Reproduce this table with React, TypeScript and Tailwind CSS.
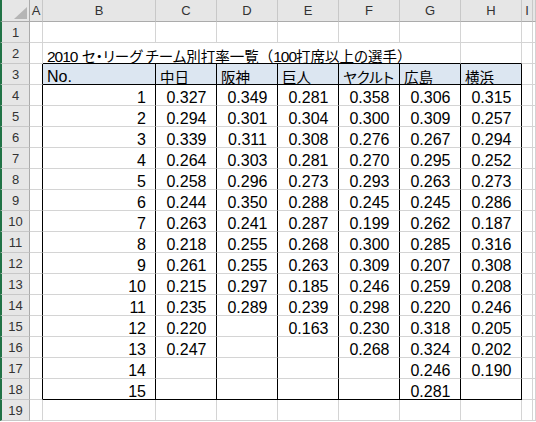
import React from "react";

const cols = ["A", "B", "C", "D", "E", "F", "G", "H", "I", ""];
const teams = ["中日", "阪神", "巨人", "ヤクルト", "広島", "横浜"];
const data: (string | null)[][] = [
  ["0.327", "0.349", "0.281", "0.358", "0.306", "0.315"],
  ["0.294", "0.301", "0.304", "0.300", "0.309", "0.257"],
  ["0.339", "0.311", "0.308", "0.276", "0.267", "0.294"],
  ["0.264", "0.303", "0.281", "0.270", "0.295", "0.252"],
  ["0.258", "0.296", "0.273", "0.293", "0.263", "0.273"],
  ["0.244", "0.350", "0.288", "0.245", "0.245", "0.286"],
  ["0.263", "0.241", "0.287", "0.199", "0.262", "0.187"],
  ["0.218", "0.255", "0.268", "0.300", "0.285", "0.316"],
  ["0.261", "0.255", "0.263", "0.309", "0.207", "0.308"],
  ["0.215", "0.297", "0.185", "0.246", "0.259", "0.208"],
  ["0.235", "0.289", "0.239", "0.298", "0.220", "0.246"],
  ["0.220", null, "0.163", "0.230", "0.318", "0.205"],
  ["0.247", null, null, "0.268", "0.324", "0.202"],
  [null, null, null, null, "0.246", "0.190"],
  [null, null, null, null, "0.281", null],
];

const FONT = "font-['Liberation_Sans','Noto_Sans_CJK_JP',sans-serif]";
const JP = "text-[14.5px] font-['Noto_Sans_CJK_JP',sans-serif] [font-feature-settings:'palt']";
const JPW = "text-[14.5px] font-['Noto_Sans_CJK_JP',sans-serif]";
const TNUM = "text-[15.5px] tracking-[-1px]";

function cellClass(r: number, c: number) {
  // r: 1..19, c: 1..10 (A..I, rest)
  const inTableRow = r >= 3 && r <= 18;
  const rightBlack = inTableRow && c >= 1 && c <= 8;
  const bottomBlack = c >= 2 && c <= 8 && (r === 2 || r === 3 || r === 18);
  const bg = r === 3 && c >= 2 && c <= 8 ? "bg-[#dce6f1]" : "bg-white";
  return [
    "border-r border-b h-[21px] whitespace-nowrap text-black text-[16px] leading-[17px] pt-[4px]",
    rightBlack ? "border-r-black" : "border-r-[#d4d4d4]",
    bottomBlack ? "border-b-black" : "border-b-[#d4d4d4]",
    bg,
  ].join(" ");
}

export default function App() {
  const cells: React.ReactNode[] = [];

  // header row
  cells.push(
    <div
      key="corner"
      className="bg-[#e6e6e6] border-l-2 border-l-[#217346] border-r border-r-[#ababab] border-b border-b-[#ababab] flex items-end justify-end pr-[2px] pb-[2px]"
    >
      <svg width="13" height="12" viewBox="0 0 13 12">
        <polygon points="13,0 13,12 0,12" fill="#b5b5b5" />
      </svg>
    </div>
  );
  cols.forEach((l, i) => {
    cells.push(
      <div
        key={"h" + i}
        className="bg-[#e6e6e6] border-r border-r-[#c8c8c8] border-b border-b-[#ababab] flex items-center justify-center text-[13px] text-[#333] pt-[1px]"
      >
        {l}
      </div>
    );
  });

  for (let r = 1; r <= 19; r++) {
    cells.push(
      <div
        key={"rh" + r}
        className="bg-[#e6e6e6] border-l-2 border-l-[#217346] border-r border-r-[#ababab] border-b border-b-[#c8c8c8] flex items-center justify-center text-[13px] text-[#333] pt-[1px]"
      >
        {r}
      </div>
    );
    for (let c = 1; c <= 10; c++) {
      if (r === 2 && c === 2) {
        cells.push(
          <div key={r + "-" + c} className={cellClass(r, 7) + " col-span-6 border-b-black pl-[4px]"}>
            <span className={TNUM}>2010</span>{" "}
            <span className={JP}>セ・リーグ チーム別打率一覧</span>
            <span className={JPW}>（</span>
            <span className={TNUM}>100</span>
            <span className={JP}>打席以上の選手</span>
            <span className={JPW}>）</span>
          </div>
        );
        c = 7;
        continue;
      }
      let content: React.ReactNode = null;
      let extra = "";
      if (r === 3 && c === 2) {
        content = "No.";
        extra = " pl-[4px]";
      } else if (r === 3 && c >= 3 && c <= 8) {
        content = <span className={JP}>{teams[c - 3]}</span>;
        extra = " pl-[4px]";
      } else if (r >= 4 && r <= 18 && c === 2) {
        content = String(r - 3);
        extra = " text-right pr-[9px]";
      } else if (r >= 4 && r <= 18 && c >= 3 && c <= 8) {
        content = data[r - 4][c - 3];
        extra = " text-center pl-[1px]";
      }
      cells.push(
        <div key={r + "-" + c} className={cellClass(r, c) + extra}>
          {content}
        </div>
      );
    }
  }

  return (
    <div
      className={
        "grid grid-cols-[30px_13px_113px_61px_61px_61px_61px_61px_61px_11px_1fr] grid-rows-[22px_repeat(19,21px)] w-[536px] h-[422px] overflow-hidden bg-white " +
        FONT
      }
    >
      {cells}
    </div>
  );
}
